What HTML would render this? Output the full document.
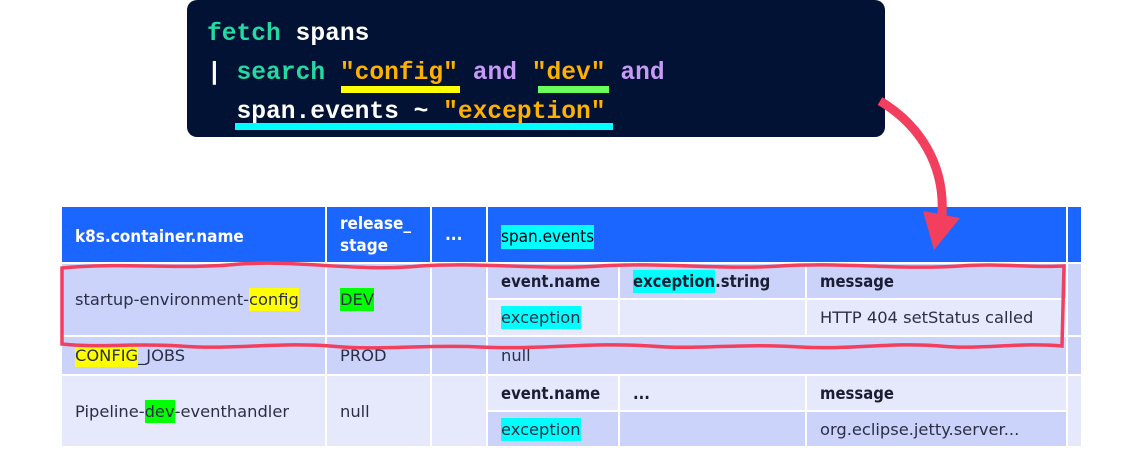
<!DOCTYPE html>
<html><head><meta charset="utf-8"><style>
html,body{margin:0;padding:0;background:#fff;width:1126px;height:451px;overflow:hidden;position:relative;font-family:"DejaVu Sans",sans-serif}
.code{position:absolute;left:187px;top:0;width:698px;height:137px;background:#021234;border-radius:10px}
.ln{position:absolute;font-family:"Liberation Mono",monospace;font-size:24.6px;font-weight:bold;white-space:pre;color:#fff;line-height:28px}
.g{color:#25d9a3}.o{color:#ffb000}.p{color:#c79af5}
.u{position:absolute;height:7px}
.c{position:absolute;box-sizing:border-box;padding-left:13px;display:flex;align-items:center;font-size:16.3px;color:#2a2f45;white-space:nowrap}
.h{background:#1a66ff;color:#fff;font-weight:bold;font-family:"DejaVu Sans Condensed","DejaVu Sans",sans-serif;font-size:17px}
.b{font-weight:bold;color:#1a1d33;font-family:"DejaVu Sans Condensed","DejaVu Sans",sans-serif;font-size:16.5px}
.L{background:#cbd3fb}.E{background:#e6e9fc}
.y{background:#ffff00}.gr{background:#00ff00}.cy{background:#00ffff}
span.cy,span.y,span.gr{padding:2px 0}
</style></head><body>
<div class="code">
<div class="ln" style="left:20px;top:21px"><span class="g">fetch</span> spans</div>
<div class="ln" style="left:20px;top:60px">| <span class="g">search</span> <span class="o">"config"</span> <span class="p">and</span> <span class="o">"dev"</span> <span class="p">and</span></div>
<div class="ln" style="left:20px;top:99px">  span.events ~ <span class="o">"exception"</span></div>
<div class="u" style="left:154px;top:86px;width:119px;background:#ffff00"></div>
<div class="u" style="left:351px;top:86px;width:71px;background:#6bff5e"></div>
<div class="u" style="left:48px;top:123px;width:378px;background:#00ffff"></div>
</div>

<div class="c h" style="left:62px;top:207px;width:263px;height:55px;padding-top:4px">k8s.container.name</div>
<div class="c h" style="left:327px;top:207px;width:103px;height:55px;line-height:22px">release_<br>stage</div>
<div class="c h" style="left:432px;top:207px;width:54px;height:55px">...</div>
<div class="c h" style="left:488px;top:207px;width:578px;height:55px;padding-top:4px"><span class="cy" style="color:#001;font-weight:normal">span.events</span></div>
<div class="c h" style="left:1068px;top:207px;width:10px;height:55px"></div>

<div class="c L" style="left:62px;top:264px;width:263px;height:71px">startup-environment-<span class="y">config</span></div>
<div class="c L" style="left:327px;top:264px;width:103px;height:71px"><span class="gr">DEV</span></div>
<div class="c L" style="left:432px;top:264px;width:54px;height:71px"></div>
<div class="c L b" style="left:488px;top:264px;width:130px;height:34px">event.name</div>
<div class="c L b" style="left:620px;top:264px;width:185px;height:34px"><span class="cy">exception</span>.string</div>
<div class="c L b" style="left:807px;top:264px;width:259px;height:34px">message</div>
<div class="c E" style="left:488px;top:300px;width:130px;height:35px"><span class="cy">exception</span></div>
<div class="c E" style="left:620px;top:300px;width:185px;height:35px"></div>
<div class="c E" style="left:807px;top:300px;width:259px;height:35px">HTTP 404 setStatus called</div>
<div class="c L" style="left:1068px;top:264px;width:10px;height:71px"></div>

<div class="c L" style="left:62px;top:337px;width:263px;height:37px"><span class="y">CONFIG</span>_JOBS</div>
<div class="c L" style="left:327px;top:337px;width:103px;height:37px">PROD</div>
<div class="c L" style="left:432px;top:337px;width:54px;height:37px"></div>
<div class="c L" style="left:488px;top:337px;width:578px;height:37px">null</div>
<div class="c L" style="left:1068px;top:337px;width:10px;height:37px"></div>

<div class="c E" style="left:62px;top:376px;width:263px;height:70px">Pipeline-<span class="gr">dev</span>-eventhandler</div>
<div class="c E" style="left:327px;top:376px;width:103px;height:70px">null</div>
<div class="c E" style="left:432px;top:376px;width:54px;height:70px"></div>
<div class="c E b" style="left:488px;top:376px;width:130px;height:34px">event.name</div>
<div class="c E b" style="left:620px;top:376px;width:185px;height:34px">...</div>
<div class="c E b" style="left:807px;top:376px;width:259px;height:34px">message</div>
<div class="c L" style="left:488px;top:412px;width:130px;height:34px"><span class="cy">exception</span></div>
<div class="c L" style="left:620px;top:412px;width:185px;height:34px"></div>
<div class="c L" style="left:807px;top:412px;width:259px;height:34px">org.eclipse.jetty.server...</div>
<div class="c E" style="left:1068px;top:376px;width:10px;height:70px"></div>

<svg width="1126" height="451" style="position:absolute;left:0;top:0" fill="none">
<path d="M62 268 C120 262 180 270 240 264 C300 260 360 272 420 266 C480 262 540 270 600 266 C660 262 720 270 780 266 C840 262 900 270 960 266 C1000 263 1030 268 1064 266 L1062 346 C1020 342 980 350 940 346 C890 342 850 350 800 347 C740 343 700 350 650 346 C590 342 540 350 480 347 C430 344 380 351 330 346 C280 342 230 350 180 346 C130 343 100 348 62 344 Z" stroke="#f23f5e" stroke-width="3.5"/>
<path d="M880 101 C920 125 945 165 942 215" stroke="#f23f5e" stroke-width="9"/>
<path d="M923 211 L960 218 L934 250 Z" fill="#f23f5e"/>
</svg>
</body></html>
